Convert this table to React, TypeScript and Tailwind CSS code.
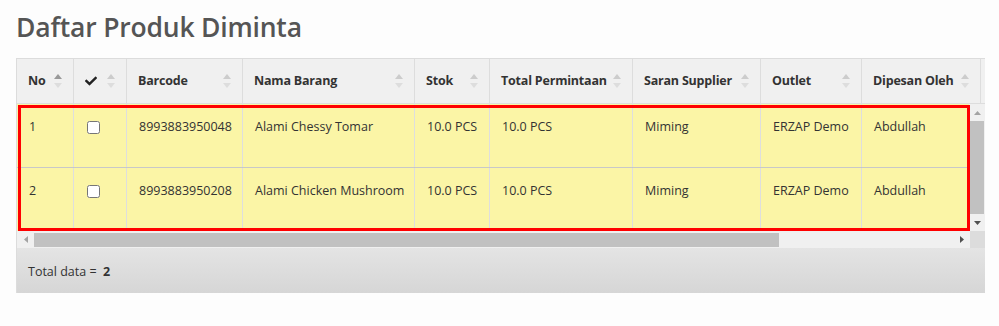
import React from 'react';
import { FaCheck } from 'react-icons/fa';

const columns = [
  { key: 'no', label: 'No', width: 57, active: true },
  { key: 'check', label: '', width: 53 },
  { key: 'barcode', label: 'Barcode', width: 116 },
  { key: 'nama', label: 'Nama Barang', width: 172 },
  { key: 'stok', label: 'Stok', width: 75 },
  { key: 'total', label: 'Total Permintaan', width: 143 },
  { key: 'saran', label: 'Saran Supplier', width: 128 },
  { key: 'outlet', label: 'Outlet', width: 101 },
  { key: 'dipesan', label: 'Dipesan Oleh', width: 119 },
];

const rows = [
  { no: '1', barcode: '8993883950048', nama: 'Alami Chessy Tomar', stok: '10.0 PCS', total: '10.0 PCS', saran: 'Miming', outlet: 'ERZAP Demo', dipesan: 'Abdullah' },
  { no: '2', barcode: '8993883950208', nama: 'Alami Chicken Mushroom', stok: '10.0 PCS', total: '10.0 PCS', saran: 'Miming', outlet: 'ERZAP Demo', dipesan: 'Abdullah' },
];

function SortIcon({ active }: { active?: boolean }) {
  return (
    <svg width="8" height="14" viewBox="0 0 8 14" className="shrink-0">
      <path d="M4 0 L8 5 L0 5 Z" fill={active ? '#999999' : '#cccccc'} />
      <path d="M0 9 L8 9 L4 14 Z" fill="#dddddd" />
    </svg>
  );
}

export default function App() {
  return (
    <div className="w-full h-[326px] bg-[#fdfdfd] overflow-hidden" style={{ fontFamily: '"Open Sans", "Liberation Sans", sans-serif' }}>
      <h1 className="pl-[16px] pt-[11px] text-[26.5px] leading-[33px] font-semibold tracking-[-0.2px] text-[#555555]">Daftar Produk Diminta</h1>

      <div className="ml-[16px] mt-[14px] w-[969px] border-l border-t border-[#dcdcdc]">
        {/* Header */}
        <div className="flex h-[45px] bg-[#f0f0f0] border-b border-[#dddddd]">
          {columns.map((c) => (
            <div
              key={c.key}
              style={{ width: c.width }}
              className="flex items-center justify-between pl-[11px] pr-[11px] border-r border-[#dddddd] text-[12.5px] font-bold tracking-[-0.2px] whitespace-nowrap text-[#333333]"
            >
              {c.key === 'check' ? <FaCheck className="w-[12px] h-[12px] text-[#222222]" /> : <span>{c.label}</span>}
              <SortIcon active={c.active} />
            </div>
          ))}
          <div className="flex-1" />
        </div>

        {/* Body with scrollbars */}
        <div className="relative flex">
          <div className="w-[953px] overflow-hidden">
            {rows.map((r, i) => (
              <div key={r.no} className={`flex bg-[#fbf5a6] ${i === 0 ? 'h-[64px] border-b border-[#c8c8c8]' : 'h-[63px]'}`}>
                {columns.map((c) => (
                  <div
                    key={c.key}
                    style={{ width: c.width }}
                    className="shrink-0 pt-[14px] pl-[12px] border-r border-[#dedede] text-[12.5px] leading-[18px] whitespace-nowrap text-[#333333]"
                  >
                    {c.key === 'check' ? (
                      <input type="checkbox" className="mt-[3px] ml-[1px] w-[13px] h-[13px]" />
                    ) : (
                      <span>{(r as Record<string, string>)[c.key]}</span>
                    )}
                  </div>
                ))}
              </div>
            ))}
          </div>
          {/* vertical scrollbar */}
          <div className="w-[16px] bg-[#f0f0f0] flex flex-col items-center">
            <div className="h-[17px] flex items-center justify-center">
              <svg width="7" height="4" viewBox="0 0 7 4"><path d="M3.5 0 L7 4 L0 4 Z" fill="#a3a3a3" /></svg>
            </div>
            <div className="w-[14px] flex-1 bg-[#c1c1c1]" />
            <div className="h-[17px] flex items-center justify-center">
              <svg width="7" height="4" viewBox="0 0 7 4"><path d="M0 0 L7 0 L3.5 4 Z" fill="#505050" /></svg>
            </div>
          </div>
          {/* highlight */}
          <div className="absolute left-[1px] top-[1px] w-[952px] h-[126px] border-[3px] border-[#ff0000] pointer-events-none" />
        </div>

        {/* horizontal scrollbar */}
        <div className="flex h-[17px]">
          <div className="w-[953px] bg-[#f0f0f0] flex items-center">
            <div className="w-[17px] flex items-center justify-center">
              <svg width="4" height="7" viewBox="0 0 4 7"><path d="M4 0 L4 7 L0 3.5 Z" fill="#a3a3a3" /></svg>
            </div>
            <div className="w-[745px] h-[14px] bg-[#c1c1c1]" />
            <div className="flex-1" />
            <div className="w-[17px] flex items-center justify-center">
              <svg width="4" height="7" viewBox="0 0 4 7"><path d="M0 0 L4 3.5 L0 7 Z" fill="#505050" /></svg>
            </div>
          </div>
          <div className="flex-1 bg-[#dcdcdc]" />
        </div>

        {/* Footer */}
        <div className="h-[45px] bg-gradient-to-b from-[#e4e4e4] to-[#d6d6d6] flex items-center pl-[11px] pt-[3px] text-[12.5px] text-[#333333]">
          <span>Total data =&nbsp;&nbsp;</span>
          <span className="font-bold">2</span>
        </div>
      </div>
    </div>
  );
}
